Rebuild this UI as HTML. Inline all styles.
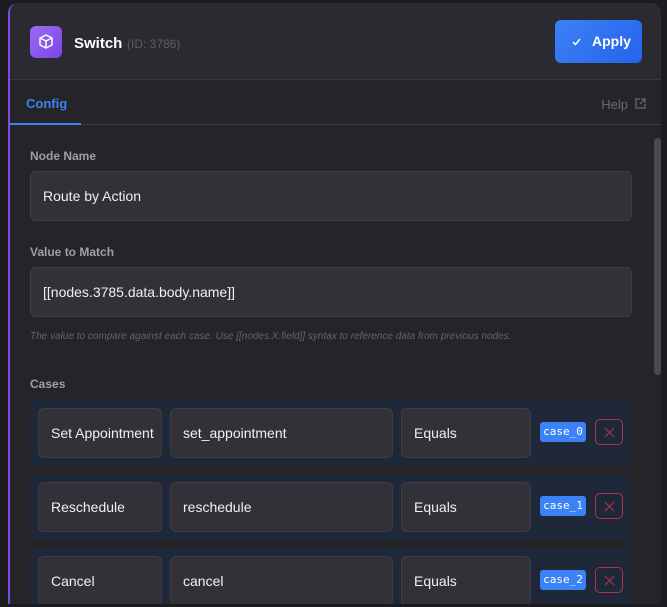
<!DOCTYPE html>
<html><head><style>
*{box-sizing:border-box;margin:0;padding:0}
body{width:667px;height:607px;background:#1c1c20;font-family:"Liberation Sans",sans-serif;overflow:hidden;position:relative}
.panel{position:absolute;left:8px;top:3px;width:653px;height:601px;background:#252429;border-left:2px solid #7c4ddb;border-radius:10px 10px 0 0;overflow:hidden}
.hdr{position:absolute;left:0;top:0;right:0;height:77px;background:#2b2a30;border-bottom:1px solid #3a3940}
.icon{position:absolute;left:20px;top:23px;width:32px;height:32px;border-radius:6px;background:linear-gradient(135deg,#9b6cf5,#7a45e6)}
.title{position:absolute;left:64px;top:32px;color:#fff;font-weight:bold;font-size:15px}
.id{position:absolute;left:117px;top:34px;color:#5e5d64;font-size:12px}
.apply{position:absolute;left:545px;top:17px;width:87px;height:43px;border-radius:6px;background:linear-gradient(135deg,#3b82f6,#2563eb);color:#fff;font-weight:bold;font-size:14px;line-height:43px;padding-left:37px;white-space:nowrap}
.tabs{position:absolute;left:0;top:78px;right:0;height:44px;border-bottom:1px solid #3a3940}
.cfg{position:absolute;left:16px;top:15px;color:#3b82f6;font-size:13px;font-weight:bold}
.uline{position:absolute;left:0;bottom:-1px;width:71px;height:2px;background:#3b82f6}
.help{position:absolute;right:33px;top:16px;color:#6b6a71;font-size:13px}
.lbl{position:absolute;left:20px;color:#a09fa6;font-size:12px;font-weight:bold}
.inp{position:absolute;left:20px;width:602px;height:50px;background:#323137;border:1px solid #3e3d44;border-radius:6px;color:#f0f0f2;font-size:14px;line-height:48px;padding-left:12px}
.hint{position:absolute;left:20px;top:328px;color:#64636a;font-size:10px;font-style:italic}
.row{position:absolute;left:20px;width:601px;height:66px;background:#1f2838;border-radius:6px}
.f{position:absolute;top:8px;height:50px;background:#323137;border:1px solid #3e3d44;border-radius:6px;color:#f0f0f2;font-size:14px;line-height:48px;padding-left:12px;white-space:nowrap;overflow:hidden}
.badge{position:absolute;left:510px;top:22px;width:46px;height:20px;background:#3b82f6;border-radius:3px;color:#fff;font-family:"DejaVu Sans Mono",monospace;font-size:11px;text-align:center;line-height:20px}
.x{position:absolute;left:565px;top:19px;width:28px;height:26px;border:1px solid #b0344a;border-radius:5px}
.x svg{position:absolute;left:8px;top:7px}
.sb{position:absolute;left:644px;top:135px;width:7px;height:237px;background:#4a4950;border-radius:4px}
</style></head><body>
<div class="panel">
<div class="hdr">
<div class="icon"><svg width="32" height="32" viewBox="0 0 32 32"><g fill="none" stroke="#fff" stroke-width="1.5" stroke-linejoin="round"><path d="M16 9l6 3v7l-6 3-6-3v-7z"/><path d="M10 12l6 3 6-3M16 15v7"/></g></svg></div>
<div class="title">Switch</div><div class="id">(ID: 3786)</div>
<div class="apply"><svg style="position:absolute;left:17px;top:18px" width="9" height="8" viewBox="0 0 9 8" fill="none" stroke="#fff" stroke-width="1.5"><path d="M1 4l2.5 2.5L8 1"/></svg>Apply</div>
</div>
<div class="tabs"><div class="cfg">Config</div><div class="uline"></div><div class="help">Help</div>
<svg style="position:absolute;right:15px;top:17px" width="11" height="11" viewBox="0 0 11 11" fill="none" stroke="#6b6a71" stroke-width="1.2"><path d="M5 1H1v9h9V6M6 1h4v4M10 1L5 6"/></svg></div>
<div class="lbl" style="top:146px">Node Name</div>
<div class="inp" style="top:168px">Route by Action</div>
<div class="lbl" style="top:242px">Value to Match</div>
<div class="inp" style="top:264px">[[nodes.3785.data.body.name]]</div>
<div class="hint">The value to compare against each case. Use [[nodes.X.field]] syntax to reference data from previous nodes.</div>
<div class="lbl" style="top:374px">Cases</div>
<div class="row" style="top:397px"><div class="f" style="left:8px;width:124px">Set Appointment</div><div class="f" style="left:140px;width:223px">set_appointment</div><div class="f" style="left:371px;width:130px">Equals</div><div class="badge">case_0</div><div class="x"><svg width="11" height="11" viewBox="0 0 11 11" stroke="#b0344a" stroke-width="1.1"><path d="M1 1l9 9M10 1l-9 9"/></svg></div></div>
<div class="row" style="top:471px"><div class="f" style="left:8px;width:124px">Reschedule</div><div class="f" style="left:140px;width:223px">reschedule</div><div class="f" style="left:371px;width:130px">Equals</div><div class="badge">case_1</div><div class="x"><svg width="11" height="11" viewBox="0 0 11 11" stroke="#b0344a" stroke-width="1.1"><path d="M1 1l9 9M10 1l-9 9"/></svg></div></div>
<div class="row" style="top:545px"><div class="f" style="left:8px;width:124px">Cancel</div><div class="f" style="left:140px;width:223px">cancel</div><div class="f" style="left:371px;width:130px">Equals</div><div class="badge">case_2</div><div class="x"><svg width="11" height="11" viewBox="0 0 11 11" stroke="#b0344a" stroke-width="1.1"><path d="M1 1l9 9M10 1l-9 9"/></svg></div></div>
<div class="sb"></div>
</div>
</body></html>
